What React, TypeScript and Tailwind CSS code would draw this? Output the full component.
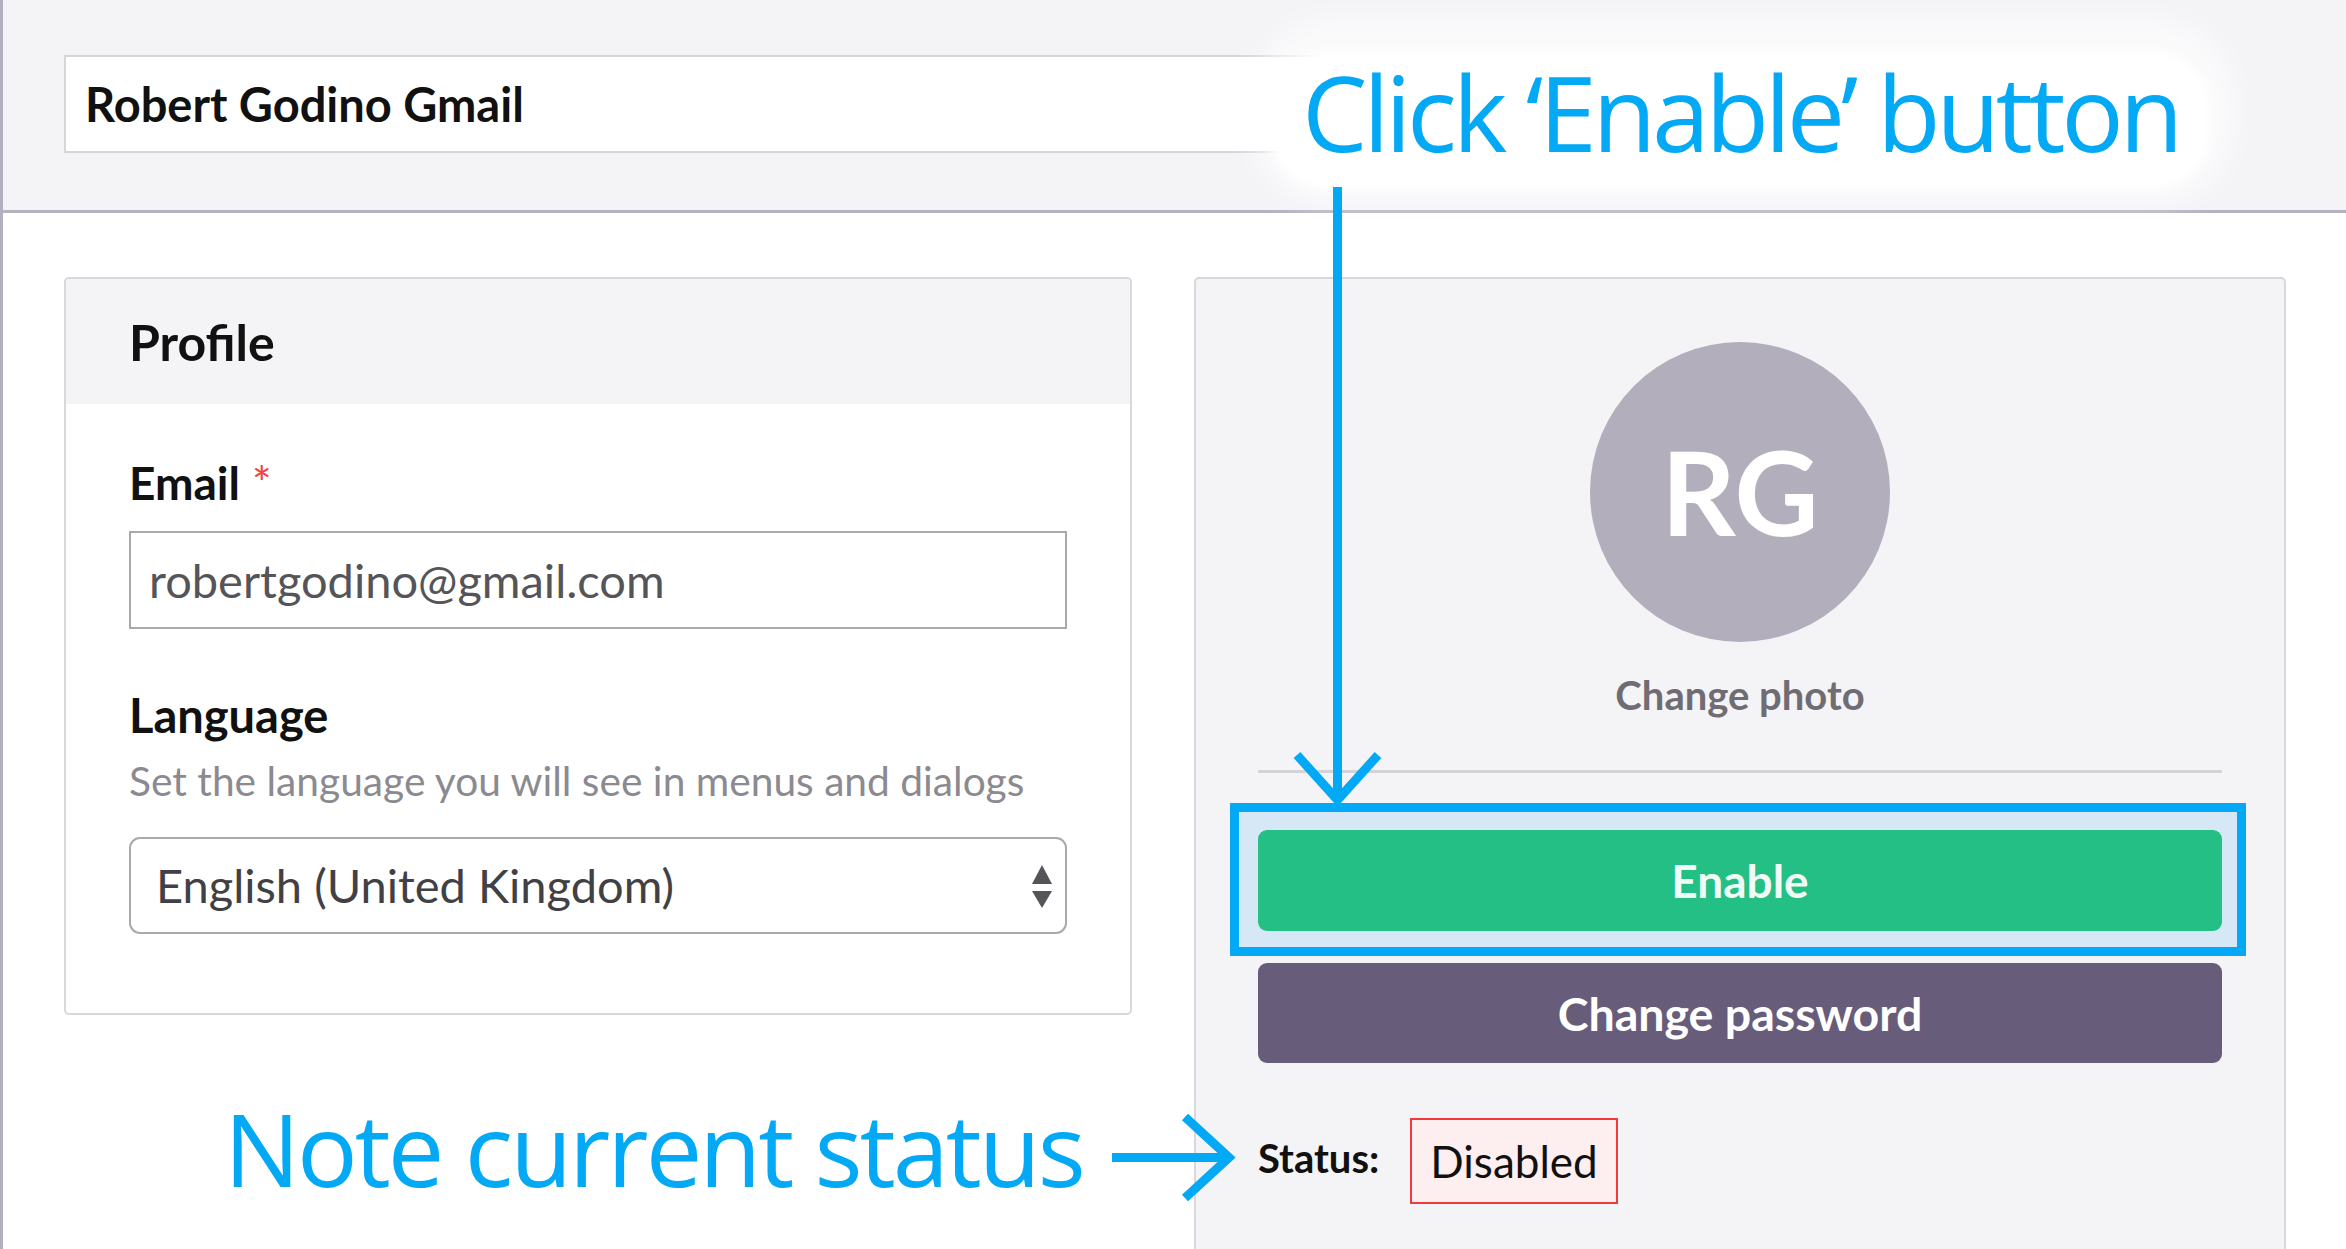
export default function App() {
  return (
    <div className="relative h-[1249px] w-[2346px] overflow-hidden bg-white font-['Lato',sans-serif] text-[#111]">
      <div className="h-full border-l-[3px] border-[#b3aec0]">
        <header className="h-[213px] border-b-[3px] border-[#b5b1c1] bg-[#f4f3f6] pl-[61px] pt-[55px]">
          <div className="flex h-[98px] w-[1770px] items-center border-2 border-[#d6d5d9] bg-white pl-[19px] text-[47px] font-bold leading-none">
            Robert Godino Gmail
          </div>
        </header>

        <main className="flex items-start gap-[62px] pl-[61px] pt-[64px]">
          {/* profile card */}
          <section className="w-[1068px] rounded-[5px] border-2 border-[#d8d7db] bg-white">
            <div className="flex h-[125px] items-center rounded-t-[4px] bg-[#f4f3f6] pl-[63px] text-[50px] font-bold leading-none">
              Profile
            </div>
            <div className="px-[63px] pb-[79px] pt-[56px]">
              <div className="flex h-[46px] items-start text-[46px] font-bold leading-none">
                Email
                <span className="ml-[12px] text-[46px] font-normal leading-none text-[#f2413f]">*</span>
              </div>
              <div className="mt-[25px] flex h-[98px] items-center border-2 border-[#a9a8ad] pl-[18px] text-[47px] leading-none text-[#555459]">
                robertgodino@gmail.com
              </div>
              <div className="mt-[63px] text-[47px] font-bold leading-none">Language</div>
              <p className="mt-[22px] text-[40.7px] leading-none text-[#8b8a90]">
                Set the language you will see in menus and dialogs
              </p>
              <div className="mt-[35px] flex h-[97px] items-center justify-between rounded-[11px] border-2 border-[#a9a8ad] pl-[25px] pr-[13px] text-[47px] leading-none text-[#414045]">
                English (United Kingdom)
                <svg width="20" height="44" viewBox="0 0 20 44" className="mt-[4px]">
                  <path d="M10 0 L20 19 L0 19 Z" fill="#555459" />
                  <path d="M0 26 L20 26 L10 43 Z" fill="#555459" />
                </svg>
              </div>
            </div>
          </section>

          {/* account card */}
          <section className="h-[1000px] w-[1092px] rounded-[5px] border-2 border-[#d8d7db] bg-[#f4f3f6] px-[62px] pt-[63px]">
            <div className="flex flex-col items-center">
              <div className="flex h-[300px] w-[300px] items-center justify-center rounded-full bg-[#b3aebc] text-[116px] font-bold leading-none text-white">
                RG
              </div>
              <div className="mt-[33px] text-[40px] font-bold leading-none text-[#6f6d73]">Change photo</div>
            </div>
            <div className="mt-[55px] h-[3px] bg-[#d3d2d6]" />

            <div className="relative mt-[57px]">
              <div className="absolute -bottom-[25px] -left-[28px] -right-[24px] -top-[27px] border-[9px] border-[#03a9f4] bg-[#d6e8f5]" />
              <button className="relative flex h-[101px] w-full items-center justify-center rounded-[9px] bg-[#24bf84] text-[46px] font-bold leading-none text-[#f1fbf6]">
                Enable
              </button>
            </div>
            <button className="mt-[32px] flex h-[100px] w-full items-center justify-center rounded-[9px] bg-[#675c7a] text-[46.5px] font-bold leading-none text-white">
              Change password
            </button>

            <div className="mt-[55px] flex items-center">
              <span className="mb-[6px] text-[40px] font-bold leading-none">Status:</span>
              <span className="ml-[31px] flex h-[86px] items-center border-2 border-[#ef3b3b] bg-[#fdeeef] px-[18px] text-[44px] leading-none text-[#111]">
                Disabled
              </span>
            </div>
          </section>
        </main>
      </div>

      {/* annotation: glow behind callout text */}
      <div className="pointer-events-none absolute left-[1250px] top-[18px] h-[186px] w-[985px] rounded-[80px] bg-white/60 blur-[14px]" />
      <div className="pointer-events-none absolute left-[1268px] top-[50px] h-[140px] w-[944px] rounded-[60px] bg-white blur-[6px]" />
      <div className="pointer-events-none absolute left-[1302px] top-[60px] whitespace-nowrap font-['Open_Sans',sans-serif] text-[104px] leading-none tracking-[-4.3px] text-[#03a9f4]">
        Click ‘Enable’ button
      </div>

      <div className="pointer-events-none absolute left-[224px] top-[1098px] whitespace-nowrap font-['Open_Sans',sans-serif] text-[101px] leading-none tracking-[-3px] text-[#03a9f4]">
        Note current status
      </div>

      <svg className="pointer-events-none absolute left-0 top-0" width="2346" height="1249" viewBox="0 0 2346 1249">
        <g stroke="#03a9f4" strokeWidth="9" fill="none">
          <path d="M1337.5 187 L1337.5 800" />
          <path d="M1297 755 L1337.5 800 L1378 755" />
          <path d="M1112 1157.5 L1228 1157.5" />
          <path d="M1185 1117 L1229 1157.5 L1185 1198" />
        </g>
      </svg>
    </div>
  );
}
